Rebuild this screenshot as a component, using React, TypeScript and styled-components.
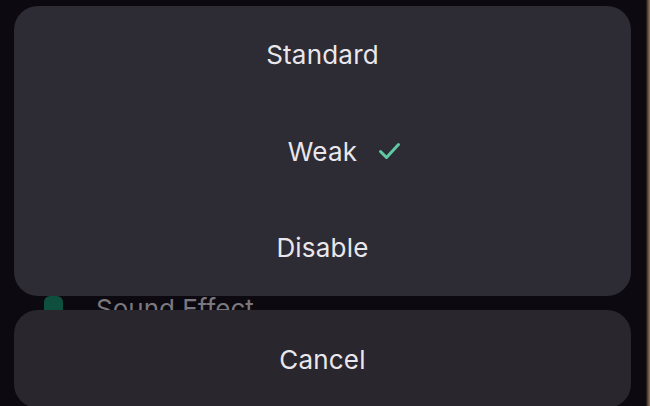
import React from "react";
import styled, { createGlobalStyle } from "styled-components";

const Global = createGlobalStyle`
  html, body { margin: 0; padding: 0; background: #0c0910; }
  body { font-family: "Inter", "Noto Sans", sans-serif; -webkit-font-smoothing: antialiased; }
`;

const Screen = styled.div`
  position: relative;
  width: 650px;
  height: 406px;
  overflow: hidden;
  background: #0c0910;
`;

const EdgeStrip = styled.div`
  position: absolute;
  top: 0;
  right: 0;
  width: 4px;
  height: 100%;
  background: linear-gradient(90deg, #1a1210 0%, #6a5542 60%, #8a7562 100%);
`;

const Sheet = styled.div`
  display: flex;
  flex-direction: column;
  padding: 6px 19px 0 14px;
  box-sizing: border-box;
  height: 420px;
`;

const Card = styled.div<{ $tone: string; $h: number }>`
  display: flex;
  flex-direction: column;
  height: ${(p) => p.$h}px;
  flex: 0 0 auto;
  background: ${(p) => p.$tone};
  border-radius: 24px;
  overflow: hidden;
`;

const Option = styled.div`
  flex: 1;
  display: flex;
  align-items: center;
  justify-content: center;
  gap: 21px;
  color: #e9e7ec;
  font-size: 26px;
  font-weight: 400;
  letter-spacing: 0.2px;
`;

const Check = styled.svg`
  width: 23px;
  height: 20px;
  margin-right: -44px;
`;

const Peek = styled.div`
  height: 14px;
  flex: 0 0 auto;
  overflow: hidden;
  display: flex;
  align-items: flex-start;
  gap: 33px;
  padding-left: 30px;
`;

const PeekIcon = styled.div`
  width: 19px;
  height: 24px;
  border-radius: 6px;
  background: #0f4f3e;
`;

const PeekText = styled.div`
  color: #7a777e;
  font-size: 26px;
  line-height: 26px;
  margin-top: 0;
`;

export default function App() {
  return (
    <Screen>
      <Global />
      <Sheet>
        <Card $tone="#2d2b34" $h={290}>
          <Option>Standard</Option>
          <Option>
            Weak
            <Check viewBox="0 0 23 20">
              <path
                d="M2.5 10.5 L8.5 16.5 L20.5 3.5"
                fill="none"
                stroke="#5fc9a4"
                strokeWidth="3"
                strokeLinecap="round"
                strokeLinejoin="round"
              />
            </Check>
          </Option>
          <Option>Disable</Option>
        </Card>
        <Peek>
          <PeekIcon />
          <PeekText>Sound Effect</PeekText>
        </Peek>
        <Card $tone="#29262e" $h={98}>
          <Option>Cancel</Option>
        </Card>
      </Sheet>
      <EdgeStrip />
    </Screen>
  );
}
